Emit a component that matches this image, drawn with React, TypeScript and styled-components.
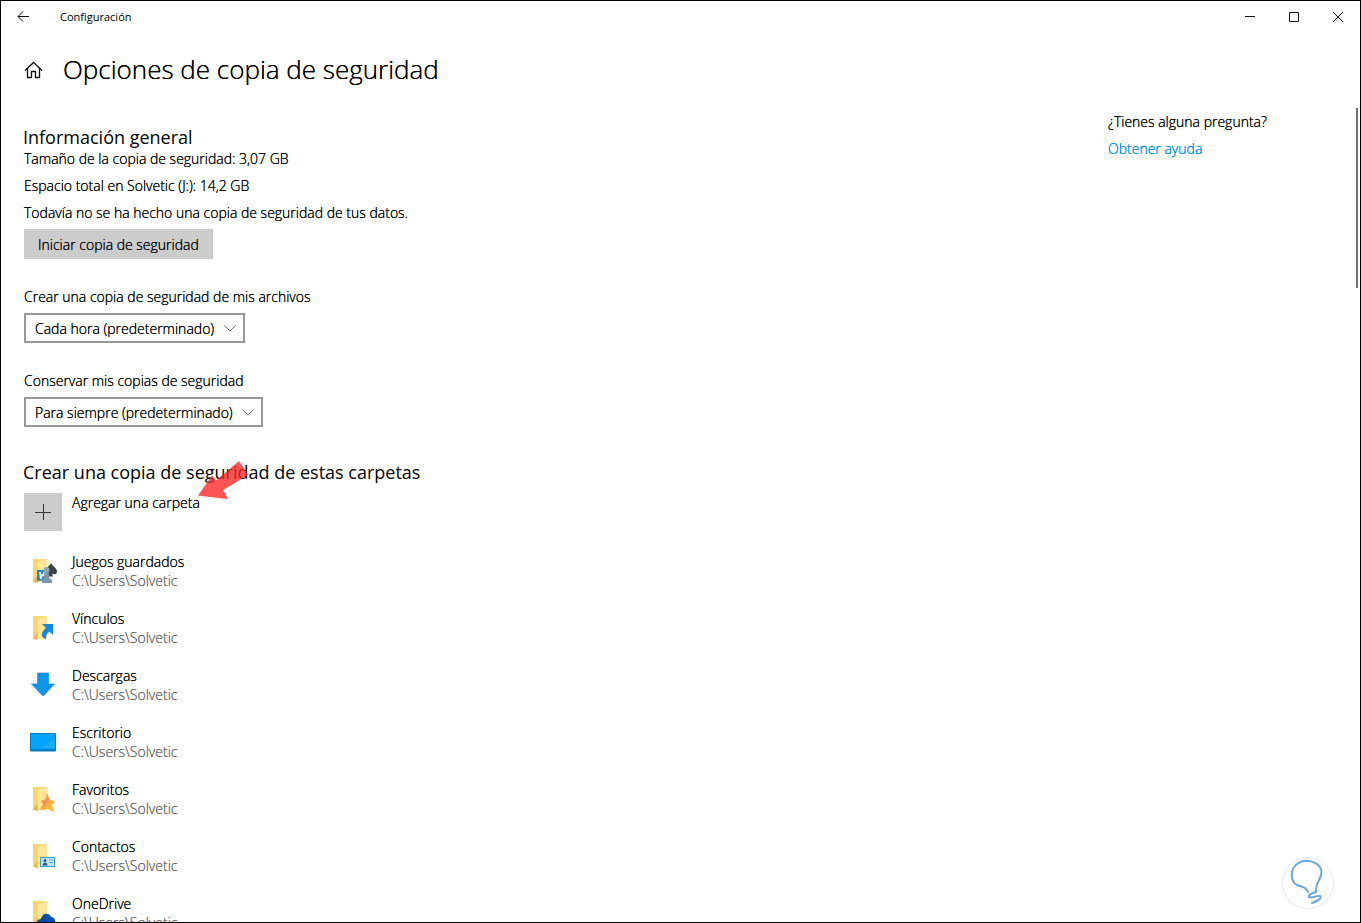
import React from "react";
import styled, { createGlobalStyle } from "styled-components";

const GlobalStyle = createGlobalStyle`
  * { box-sizing: border-box; }
  body { margin: 0; background: #fff; }
  button, select { font: inherit; color: inherit; border-radius: 0; text-shadow: inherit; }
  h1, h2, p, ul { margin: 0; padding: 0; font-weight: inherit; }
`;

/* The zero-offset shadow firms up the light weight of the body text. */
const Window = styled.div`
  position: relative;
  display: flex;
  flex-direction: column;
  height: 100vh;
  overflow: hidden;
  border: 1px solid #000;
  background: #fff;
  color: #000;
  font-family: "Open Sans", "Noto Sans", sans-serif;
  font-size: 14px;
  font-weight: 300;
  line-height: 19px;
  text-shadow: 0 0 0 currentColor;
`;

const TitleBar = styled.header`
  display: flex;
  align-items: center;
  flex: none;
  height: 31px;
  font-size: 11px;
  font-weight: 400;
  text-shadow: none;
`;

const BarButton = styled.button`
  display: grid;
  place-items: center;
  width: 44px;
  height: 30px;
  padding: 0;
  border: 0;
  background: none;
`;

const BarTitle = styled.span`
  flex: 1;
  padding-left: 15px;
`;

const PageHeader = styled.div`
  display: flex;
  align-items: center;
  flex: none;
  gap: 20px;
  height: 76px;
  padding-left: 22px;
`;

const HomeLink = styled.a`
  display: flex;
  color: inherit;
`;

const PageTitle = styled.h1`
  padding-bottom: 2px;
  font-size: 26px;
  line-height: 36px;
`;

const Body = styled.div`
  display: flex;
  flex: 1;
  min-height: 0;
  padding-right: 2px;
`;

const Main = styled.main`
  flex: 1;
  padding: 17px 0 0 22px;
  overflow: hidden;
`;

const SectionTitle = styled.h2`
  position: relative;
  font-size: 18px;
  font-weight: 400;
  line-height: 24px;
  text-shadow: none;
`;

const Facts = styled.div`
  display: flex;
  flex-direction: column;
  gap: 8px;
  padding-left: 1px;
  margin-bottom: 7px;
`;

const GreyButton = styled.button`
  height: 30px;
  margin-left: 1px;
  padding: 0 14px;
  border: 0;
  background: #ccc;
`;

const Field = styled.div`
  display: flex;
  flex-direction: column;
  align-items: flex-start;
  gap: 7px;
  padding: 28px 0 0 1px;
`;

const SelectBox = styled.div`
  display: grid;
  align-items: center;
  > * { grid-area: 1 / 1; }
  > svg { justify-self: end; margin-right: 9px; pointer-events: none; }
`;

const Select = styled.select`
  height: 30px;
  padding: 0 28px 0 9px;
  border: 2px solid #999;
  background: #fff;
  appearance: none;
`;

const Folders = styled.section`
  padding-top: 33px;
`;

const FolderList = styled.ul`
  display: flex;
  flex-direction: column;
  gap: 19px;
  padding-left: 1px;
  list-style: none;
`;

const FolderRow = styled.li`
  display: flex;
  gap: 10px;
`;

const AddButton = styled.button`
  display: flex;
  gap: 10px;
  margin: 9px 0 21px 1px;
  padding: 0;
  border: 0;
  background: none;
`;

const IconCell = styled.span<{ $filled?: boolean }>`
  display: grid;
  place-items: center;
  width: 38px;
  height: 38px;
  background: ${(p) => (p.$filled ? "#ccc" : "transparent")};
`;

const FolderPath = styled.p`
  color: #6e6e6e;
`;

const Aside = styled.aside`
  display: flex;
  flex-direction: column;
  gap: 8px;
  width: 248px;
  padding-top: 4px;
`;

const HelpLink = styled.a`
  color: #0091e2;
  text-decoration: none;
`;

const ScrollThumb = styled.div`
  width: 2px;
  height: 180px;
  background: #6e6e6e;
`;

const PointerArrow = styled.svg`
  position: absolute;
  left: 172px;
  top: 0;
`;

const Watermark = styled.svg`
  position: absolute;
  right: 26px;
  bottom: 13px;
`;

const Chevron = () => (
  <svg width="12" height="7" viewBox="0 0 12 7" fill="none" stroke="#777">
    <path d="M.5.5 6 6 11.5.5" />
  </svg>
);

const FolderShape = () => (
  <>
    <path d="M4 3h14v23H4z" fill="#f8d775" />
    <path d="M9 6 18 3v23H9z" fill="#ffe69b" />
    <path d="M4 3h4.500v24L4 25z" fill="#fbd568" />
    <path d="M8.500 20v7L4 25.500z" fill="#e9b64a" />
  </>
);

type IconName = "games" | "links" | "downloads" | "desktop" | "favorites" | "contacts" | "onedrive";

const overlays: Record<IconName, React.ReactNode> = {
  games: (
    <g transform="translate(2 1)">
      <FolderShape />
      <path d="M8 14h9v10l-9 1z" fill="#2f84c8" />
      <path d="M10 16h2v2h2v-2h2v3l-3 2v2h-2z" fill="#d8efff" />
      <path d="M22 7c1 3 6 5 6 8.500 0 3-3 3.500-5 2l1 3h-5l1-3c-2 1-4 0-4-2C16 12 21 10 22 7z" fill="#3c4248" />
      <circle cx="17.500" cy="14" r="3" fill="#8fa3b0" />
      <path d="M15.500 16h4l1 6 2.500 2v3h-10v-3l2-2z" fill="#7e97a6" />
    </g>
  ),
  links: (
    <g transform="translate(2 1)">
      <FolderShape />
      <path d="M13 11h11v11l-3.500-3.500c-3 2-4 4.500-3.500 8l-4-3c-.5-4 1.500-6.500 4-8.500z" fill="#1687dc" />
    </g>
  ),
  downloads: <path d="M10.500 4h11v11h6L16 27 4.500 15h6z" fill="#0f95ea" stroke="#0a7fd0" strokeWidth=".6" />,
  desktop: (
    <>
      <path d="M3.500 7.500h25v17.500h-25z" fill="#03a4fb" stroke="#0878bd" />
      <path d="M28 13v9H15z" fill="#1badfb" />
      <path d="M4 23h24v2H4z" fill="#067fc8" />
    </>
  ),
  favorites: (
    <g transform="translate(2 1)">
      <FolderShape />
      <path d="m18 9 3 7 5 1-3 4 2 7-6-3-8 1 3-6-2-3 5-2z" fill="#fdb53c" />
      <path d="m18 9-1 6-5 2 3 3-4 6 6-5 3-5z" fill="#f4935a" />
    </g>
  ),
  contacts: (
    <g transform="translate(2 1)">
      <FolderShape />
      <path d="M11.500 16.500h14v9h-14z" fill="#bfe6fa" stroke="#3f9fcb" />
      <circle cx="16" cy="19.500" r="1.500" fill="#2c5b78" />
      <path d="M13.500 24.500c0-4 5-4 5 0z" fill="#2c5b78" />
      <path d="M20 19h4M20 21.500h4" stroke="#5daed4" />
    </g>
  ),
  onedrive: (
    <g transform="translate(2 1)">
      <FolderShape />
      <path d="M8 28c-1-5 1-7 4-7 1-6 8-7 10-2 4 0 5 4 4 9z" fill="#0a4fa8" />
      <path d="M12 21c2 0 4 1 5 2" stroke="#083b82" fill="none" />
    </g>
  ),
};

const FolderIcon = ({ name }: { name: IconName }) => (
  <svg width="32" height="32" viewBox="0 0 32 32">{overlays[name]}</svg>
);

const folders: { name: string; icon: IconName }[] = [
  { name: "Juegos guardados", icon: "games" },
  { name: "Vínculos", icon: "links" },
  { name: "Descargas", icon: "downloads" },
  { name: "Escritorio", icon: "desktop" },
  { name: "Favoritos", icon: "favorites" },
  { name: "Contactos", icon: "contacts" },
  { name: "OneDrive", icon: "onedrive" },
];

export default function App() {
  return (
    <Window>
      <GlobalStyle />
      <TitleBar>
        <BarButton aria-label="Atrás">
          <svg width="12" height="12" viewBox="0 0 12 12" fill="none" stroke="#111">
            <path d="M12 5.500H1M6 .5l-5 5 5 5" />
          </svg>
        </BarButton>
        <BarTitle>Configuración</BarTitle>
        <BarButton aria-label="Minimizar">
          <svg width="10" height="10" viewBox="0 0 10 10" stroke="#111"><path d="M0 4.500h10" /></svg>
        </BarButton>
        <BarButton aria-label="Maximizar">
          <svg width="10" height="10" viewBox="0 0 10 10" fill="none" stroke="#111"><path d="M.5.500h9v9h-9z" /></svg>
        </BarButton>
        <BarButton aria-label="Cerrar">
          <svg width="10" height="10" viewBox="0 0 10 10" stroke="#111"><path d="m0 0 10 10M10 0 0 10" /></svg>
        </BarButton>
      </TitleBar>
      <PageHeader>
        <HomeLink href="#" aria-label="Inicio">
          <svg width="20" height="18" viewBox="0 0 20 18" fill="none" stroke="#111" strokeWidth="1.300">
            <path d="M2 9.500 10.500 1.500l8.500 8M4.500 7.500v9h4v-6h4v6h4v-9" />
          </svg>
        </HomeLink>
        <PageTitle>Opciones de copia de seguridad</PageTitle>
      </PageHeader>
      <Body>
        <Main>
          <SectionTitle>Información general</SectionTitle>
          <Facts>
            <p>Tamaño de la copia de seguridad: 3,07 GB</p>
            <p>Espacio total en Solvetic (J:): 14,2 GB</p>
            <p>Todavía no se ha hecho una copia de seguridad de tus datos.</p>
          </Facts>
          <GreyButton>Iniciar copia de seguridad</GreyButton>
          <Field>
            <label htmlFor="frequency">Crear una copia de seguridad de mis archivos</label>
            <SelectBox>
              <Select id="frequency"><option>Cada hora (predeterminado)</option></Select>
              <Chevron />
            </SelectBox>
          </Field>
          <Field>
            <label htmlFor="retention">Conservar mis copias de seguridad</label>
            <SelectBox>
              <Select id="retention"><option>Para siempre (predeterminado)</option></Select>
              <Chevron />
            </SelectBox>
          </Field>
          <Folders>
            <SectionTitle>
              Crear una copia de seguridad de estas carpetas
              <PointerArrow width="56" height="44" viewBox="0 0 56 44">
                <path d="M2 37 17 17l4 5L44 2l8 14-25 15 5 9z" fill="#888" fillOpacity=".15" />
                <path d="M3 35.500 17 15.500l4 5L44 1l9 14-25 15 5 9z" fill="#ff2020" fillOpacity=".75" />
              </PointerArrow>
            </SectionTitle>
            <AddButton>
              <IconCell $filled>
                <svg width="16" height="16" viewBox="0 0 16 16" stroke="#333"><path d="M0 8.500h16M8.500 0v16" /></svg>
              </IconCell>
              Agregar una carpeta
            </AddButton>
            <FolderList>
              {folders.map((f) => (
                <FolderRow key={f.name}>
                  <IconCell><FolderIcon name={f.icon} /></IconCell>
                  <div>
                    <p>{f.name}</p>
                    <FolderPath>C:\Users\Solvetic</FolderPath>
                  </div>
                </FolderRow>
              ))}
            </FolderList>
          </Folders>
        </Main>
        <Aside>
          <p>¿Tienes alguna pregunta?</p>
          <HelpLink href="#">Obtener ayuda</HelpLink>
        </Aside>
        <ScrollThumb />
      </Body>
      <Watermark width="52" height="52" viewBox="0 0 52 52" fill="none">
        <circle cx="26" cy="26" r="25.500" fill="#fff" stroke="#e4eaf3" />
        <path d="M26 35c-2-6-7-5-11-7C8 24 8 12 15 7c8-6 20-3 24 5 3 9-6 12-5 23-4 1-8 3-7 5 2 2 8-2 11-1 3 2-4 6-8 7" stroke="#6fa8d8" strokeWidth="2" strokeLinecap="round" />
      </Watermark>
    </Window>
  );
}
